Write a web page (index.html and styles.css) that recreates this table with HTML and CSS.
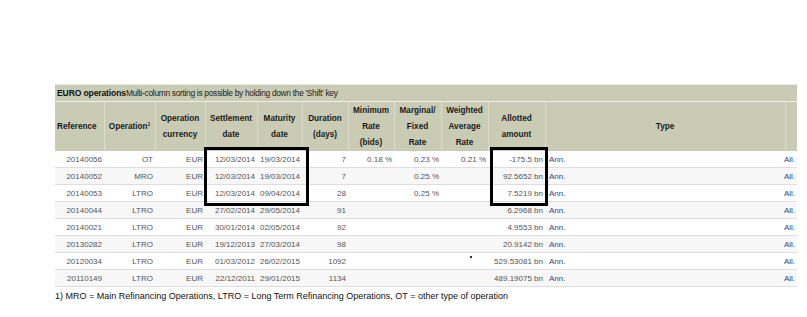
FILE: index.html
```html
<!DOCTYPE html>
<html>
<head>
<meta charset="utf-8">
<link rel="stylesheet" href="styles.css">
</head>
<body>
<div class="page">
  <div class="wrap">
    <div class="titlebar"><span class="title">EURO operations</span><span class="sub">Multi-column sorting is possible by holding down the 'Shift' key</span></div>
    <table class="ops">
      <colgroup>
        <col class="c-ref"><col class="c-op"><col class="c-cur"><col class="c-set"><col class="c-mat"><col class="c-dur"><col class="c-min"><col class="c-mar"><col class="c-wei"><col class="c-all"><col class="c-type"><col class="c-end">
      </colgroup>
      <thead>
        <tr>
          <th class="left">Reference</th>
          <th>Operation<sup>1</sup></th>
          <th>Operation<br>currency</th>
          <th>Settlement<br>date</th>
          <th>Maturity<br>date</th>
          <th>Duration<br>(days)</th>
          <th>Minimum<br>Rate<br>(bids)</th>
          <th>Marginal/<br>Fixed<br>Rate</th>
          <th>Weighted<br>Average<br>Rate</th>
          <th>Allotted<br>amount</th>
          <th>Type</th>
          <th></th>
        </tr>
      </thead>
      <tbody>
        <tr><td>20140056</td><td>OT</td><td>EUR</td><td>12/03/2014</td><td>19/03/2014</td><td>7</td><td>0.18 %</td><td>0.23 %</td><td>0.21 %</td><td>-175.5 bn</td><td class="type" colspan="2"><a>Ann.</a><a>All.</a></td></tr>
        <tr><td>20140052</td><td>MRO</td><td>EUR</td><td>12/03/2014</td><td>19/03/2014</td><td>7</td><td></td><td>0.25 %</td><td></td><td>92.5652 bn</td><td class="type" colspan="2"><a>Ann.</a><a>All.</a></td></tr>
        <tr><td>20140053</td><td>LTRO</td><td>EUR</td><td>12/03/2014</td><td>09/04/2014</td><td>28</td><td></td><td>0.25 %</td><td></td><td>7.5219 bn</td><td class="type" colspan="2"><a>Ann.</a><a>All.</a></td></tr>
        <tr><td>20140044</td><td>LTRO</td><td>EUR</td><td>27/02/2014</td><td>29/05/2014</td><td>91</td><td></td><td></td><td></td><td>6.2968 bn</td><td class="type" colspan="2"><a>Ann.</a><a>All.</a></td></tr>
        <tr><td>20140021</td><td>LTRO</td><td>EUR</td><td>30/01/2014</td><td>02/05/2014</td><td>92</td><td></td><td></td><td></td><td>4.9553 bn</td><td class="type" colspan="2"><a>Ann.</a><a>All.</a></td></tr>
        <tr><td>20130282</td><td>LTRO</td><td>EUR</td><td>19/12/2013</td><td>27/03/2014</td><td>98</td><td></td><td></td><td></td><td>20.9142 bn</td><td class="type" colspan="2"><a>Ann.</a><a>All.</a></td></tr>
        <tr><td>20120034</td><td>LTRO</td><td>EUR</td><td>01/03/2012</td><td>26/02/2015</td><td>1092</td><td></td><td></td><td class="dotcell"><span class="dot"></span></td><td>529.53081 bn</td><td class="type" colspan="2"><a>Ann.</a><a>All.</a></td></tr>
        <tr><td>20110149</td><td>LTRO</td><td>EUR</td><td>22/12/2011</td><td>29/01/2015</td><td>1134</td><td></td><td></td><td></td><td>489.19075 bn</td><td class="type" colspan="2"><a>Ann.</a><a>All.</a></td></tr>
      </tbody>
    </table>
    <div class="box box-dates"></div>
    <div class="box box-amount"></div>
    <p class="note">1) MRO = Main Refinancing Operations, LTRO = Long Term Refinancing Operations, OT = other type of operation</p>
  </div>
</div>
</body>
</html>
```
FILE: styles.css
```css
html, body {
  margin: 0;
  padding: 0;
  background: #ffffff;
}
.page {
  padding: 84px 0 0 55px;
  font-family: "Liberation Sans", Arial, sans-serif;
}
.wrap {
  position: relative;
  width: 742px;
}
.titlebar {
  height: 16px;
  background: #c9cbb5;
  border-top: 1px solid #e8e9e0;
  display: flex;
  align-items: center;
  padding-left: 2px;
  white-space: nowrap;
}
.title {
  font-weight: bold;
  font-size: 8.6px;
  color: #111;
  letter-spacing: -0.15px;
}
.sub {
  font-size: 8.4px;
  letter-spacing: -0.3px;
  color: #222;
}
.ops {
  border-collapse: collapse;
  table-layout: fixed;
  width: 742px;
}
.c-ref { width: 49px; }
.c-op { width: 51px; }
.c-cur { width: 50px; }
.c-set { width: 52px; }
.c-mat { width: 45px; }
.c-dur { width: 46px; }
.c-min { width: 46px; }
.c-mar { width: 47px; }
.c-wei { width: 47px; }
.c-all { width: 57px; }
.c-type { width: 240px; }
.c-end { width: 12px; }
.ops th {
  background: #c9cbb5;
  height: 49px;
  padding: 0 2px;
  font-size: 8.2px;
  font-weight: bold;
  line-height: 16px;
  color: #1a1a1a;
  text-align: center;
  vertical-align: middle;
  border-top: 1px solid #eeeee6;
  border-left: 1px solid #dcddcd;
}
.ops th:first-child { border-left: none; }
.ops th.left { text-align: left; }
.ops th sup {
  font-size: 5px;
  line-height: 0;
  vertical-align: 3px;
}
.ops td {
  height: 16px;
  padding: 0 2px;
  font-size: 8px;
  color: #555555;
  text-align: right;
  white-space: nowrap;
  border-bottom: 1px solid #dedede;
}
.ops tbody tr:nth-child(even) td { background: #f7f7f7; }
.ops td.type {
  text-align: left;
  padding: 0 2px 0 4px;
}
.type a {
  color: #2f4580;
  text-decoration: none;
}
.type a + a {
  float: right;
}
.dotcell { position: relative; }
.dot {
  position: absolute;
  left: 29px;
  top: 3px;
  width: 2px;
  height: 2px;
  background: #333;
}
.box {
  position: absolute;
  border: 3px solid #000;
}
.box-dates {
  left: 149px;
  top: 63px;
  width: 99px;
  height: 53px;
}
.box-amount {
  left: 435px;
  top: 63px;
  width: 52px;
  height: 53px;
}
.note {
  margin: 4px 0 0 0;
  font-size: 9px;
  color: #111;
}
```
